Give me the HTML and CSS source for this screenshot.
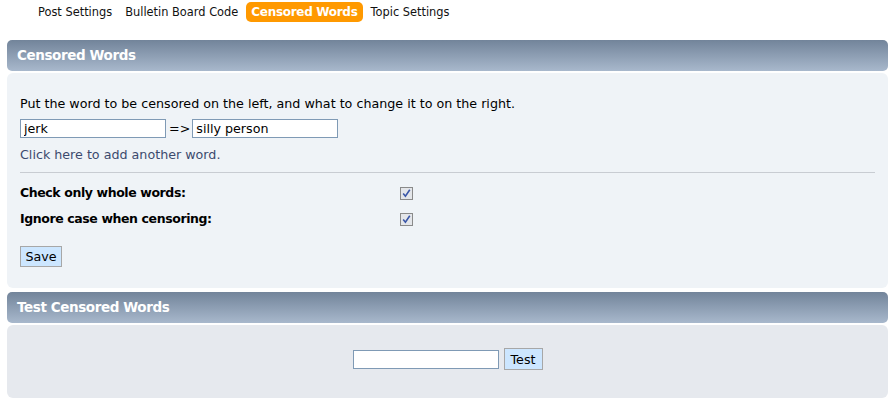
FILE: index.html
```html
<!DOCTYPE html>
<html>
<head>
<meta charset="utf-8">
<link rel="stylesheet" href="styles.css">
</head>
<body>
<div class="page">
  <nav class="tabs">
    <a class="tab">Post Settings</a>
    <a class="tab">Bulletin Board Code</a>
    <a class="tab active">Censored Words</a>
    <a class="tab">Topic Settings</a>
  </nav>

  <section class="panel">
    <h2 class="panel-head">Censored Words</h2>
    <div class="panel-body light">
      <p class="intro">Put the word to be censored on the left, and what to change it to on the right.</p>
      <div class="word-row">
        <input class="field" type="text" value="jerk">
        <span class="arrow">=&gt;</span>
        <input class="field" type="text" value="silly person">
      </div>
      <a class="add-link">Click here to add another word.</a>
      <hr class="sep">
      <div class="opts">
        <label class="opt-label">Check only whole words:</label>
        <span class="check"><svg width="13" height="13" viewBox="0 0 13 13"><rect x="0.5" y="0.5" width="12" height="12" fill="#e4e6ea" stroke="#8a8a8a"/><path d="M3.2 6.6 L5.4 9.2 L9.8 2.8" fill="none" stroke="#3a56a8" stroke-width="1.6"/></svg></span>
        <label class="opt-label">Ignore case when censoring:</label>
        <span class="check"><svg width="13" height="13" viewBox="0 0 13 13"><rect x="0.5" y="0.5" width="12" height="12" fill="#e4e6ea" stroke="#8a8a8a"/><path d="M3.2 6.6 L5.4 9.2 L9.8 2.8" fill="none" stroke="#3a56a8" stroke-width="1.6"/></svg></span>
      </div>
      <button class="btn save">Save</button>
    </div>
  </section>

  <section class="panel">
    <h2 class="panel-head">Test Censored Words</h2>
    <div class="panel-body gray test">
      <input class="field test-field" type="text">
      <button class="btn">Test</button>
    </div>
  </section>
</div>
</body>
</html>
```

FILE: styles.css
```css
* { box-sizing: border-box; }
html, body { margin: 0; padding: 0; background: #fff; }
body {
  font-family: "DejaVu Sans", Verdana, sans-serif;
  font-size: 12.7px;
  color: #000;
}
.page { padding: 0 6px 0 7px; }

.tabs {
  display: flex;
  align-items: flex-start;
  padding: 2px 0 0 25px;
  height: 40px;
}
.tab {
  font-size: 11.4px;
  line-height: 20px;
  padding: 0 6px;
  margin-right: 1px;
  color: #111;
  border-radius: 5px;
}
.tab.active {
  background: #ff9900;
  color: #fff;
  font-weight: bold;
  font-size: 12px;
  letter-spacing: -0.3px;
  padding: 0 5px;
  margin: 0 2px 0 1px;
}

.panel { margin-bottom: 4px; }
.panel-head {
  margin: 0;
  height: 31px;
  line-height: 31px;
  padding-left: 10px;
  font-size: 13.5px;
  letter-spacing: -0.4px;
  font-weight: bold;
  color: #fff;
  background: linear-gradient(#72849a, #a8b8cc);
  border-radius: 5px;
}
.panel-body {
  margin-top: 2px;
  border-radius: 6px;
  padding: 23px 13px 21px;
}
.light { background: #eff3f7; }
.gray { background: #e6e9ee; }

.intro { margin: 0 0 7px; line-height: 16px; }
.word-row { display: flex; align-items: center; height: 19px; }
.field {
  width: 146px;
  height: 19px;
  border: 1px solid #7f9ab5;
  background: #fff;
  font-family: "DejaVu Sans", Verdana, sans-serif;
  font-size: 12.7px;
  padding: 0 3px;
  margin: 0;
  outline: none;
}
.arrow { margin: 0 2px 0 3px; }
.add-link {
  display: block;
  color: #3c4a6e;
  margin-top: 9px;
  line-height: 16px;
}
.sep {
  border: 0;
  border-top: 1px solid #c8ccd2;
  margin: 9px 0 0;
  height: 0;
}
.opts {
  display: grid;
  grid-template-columns: 380px auto;
  row-gap: 10px;
  margin-top: 12px;
  align-items: center;
}
.opt-label { font-weight: bold; font-size: 12.5px; letter-spacing: -0.4px; line-height: 16px; }
.check { display: flex; height: 16px; align-items: center; }
.check svg { display: block; }

.btn {
  font-family: "DejaVu Sans", Verdana, sans-serif;
  font-size: 12.7px;
  background: #cce6ff;
  border: 1px solid #a7a7a7;
  color: #000;
  height: 22px;
  padding: 0 5px;
  margin: 0;
  border-radius: 0;
}
.save { margin-top: 19px; display: block; height: 21px; width: 42px; padding: 0; }

.test {
  display: flex;
  justify-content: center;
  align-items: center;
  gap: 5px;
  padding: 23px 13px 28px;
  height: 73px;
}
.test-field { width: 146px; }
.test .btn { width: 39px; padding: 0; }
```
